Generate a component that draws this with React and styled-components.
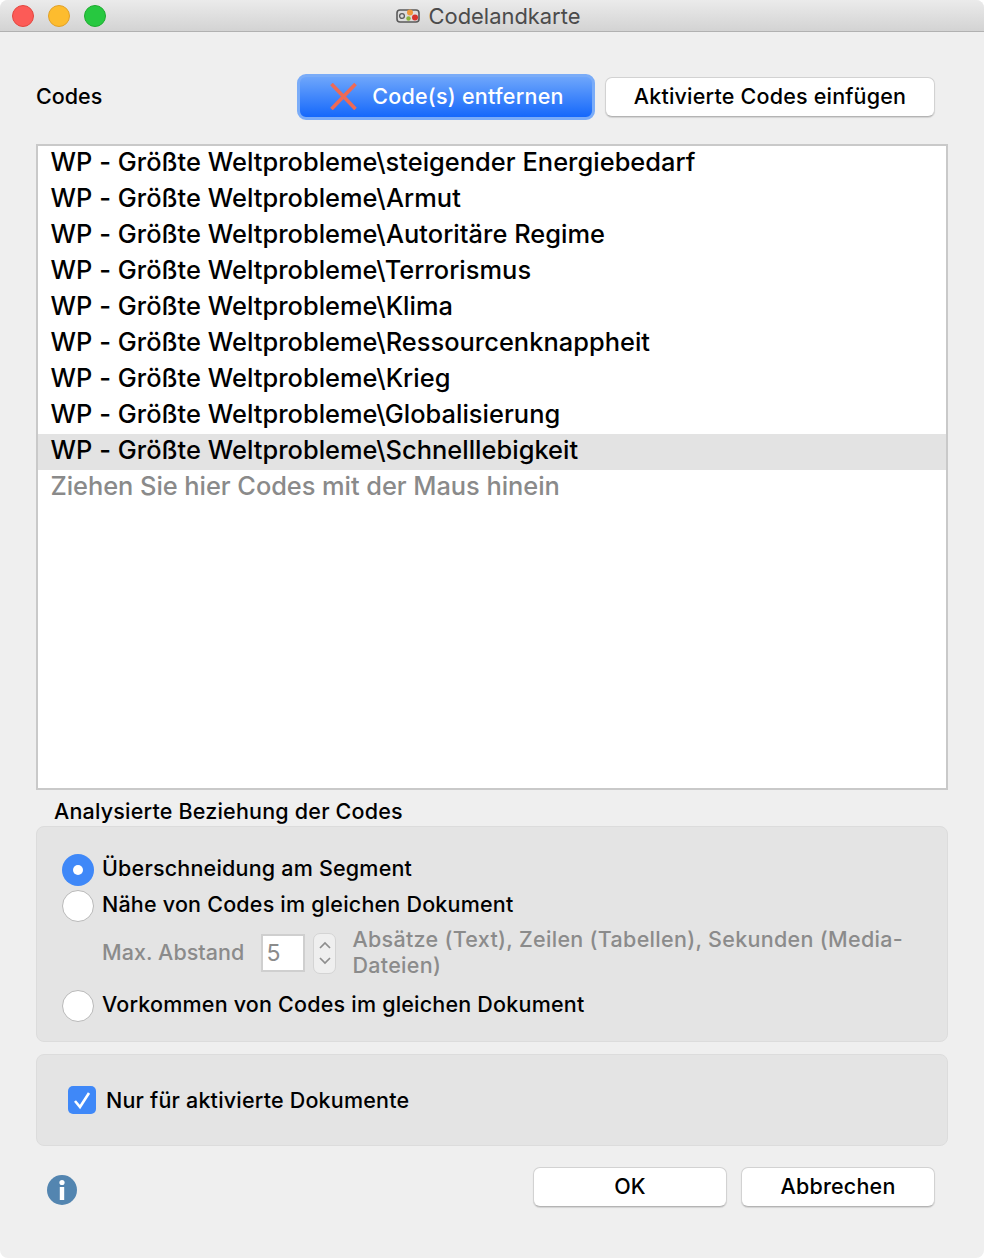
import React from 'react'
import styled, { createGlobalStyle } from 'styled-components'

const codes = [
  'steigender Energiebedarf',
  'Armut',
  'Autoritäre Regime',
  'Terrorismus',
  'Klima',
  'Ressourcenknappheit',
  'Krieg',
  'Globalisierung',
  'Schnelllebigkeit',
]

const Global = createGlobalStyle`
  html, body { margin: 0; padding: 0; background: #fff; }
  body {
    font-family: Inter, "Liberation Sans", sans-serif;
    font-weight: 450;
    letter-spacing: 0.2px;
    color: #000;
  }
`

const Window = styled.div`
  width: 984px;
  height: 1258px;
  background: #efefef;
  border-radius: 8px;
  display: flex;
  flex-direction: column;
  overflow: hidden;
`

const TitleBar = styled.div`
  height: 31px;
  flex: none;
  position: relative;
  display: flex;
  align-items: center;
  justify-content: center;
  gap: 8px;
  padding-right: 8px;
  background: linear-gradient(#ebebeb, #d3d3d3);
  border-bottom: 1px solid #b1b1b1;
  font-size: 21.9px;
  font-weight: 400;
  letter-spacing: 0;
  color: #4b4b4b;
`

const TitleText = styled.span`
  padding-top: 1px;
`

const Lights = styled.div`
  position: absolute;
  left: 12px;
  top: 5px;
  display: flex;
  gap: 14px;
`

const Light = styled.span`
  width: 22px;
  height: 22px;
  box-sizing: border-box;
  border-radius: 50%;
  background: ${p => p.$color};
  border: 1px solid ${p => p.$edge};
`

const Body = styled.div`
  flex: 1;
  display: flex;
  flex-direction: column;
  padding: 42px 36px 0;
`

const TopRow = styled.div`
  height: 46px;
  display: flex;
  align-items: center;
`

const CodesLabel = styled.div`
  font-size: 21.5px;
  letter-spacing: 0;
  flex: 1;
  padding-bottom: 2px;
`

const Button = styled.button`
  height: 40px;
  width: ${p => p.$width}px;
  margin-right: ${p => p.$right || 0}px;
  box-sizing: border-box;
  background: #fff;
  border: 1px solid #d2d2d2;
  border-bottom-color: #b4b4b4;
  border-radius: 7px;
  box-shadow: 0 1px 1px rgba(0, 0, 0, 0.12);
  font: inherit;
  font-size: 21.5px;
  letter-spacing: inherit;
  color: #000;
  padding: 0 0 2px;
`

const RemoveButton = styled.button`
  width: 298px;
  height: 46px;
  margin-right: 10px;
  box-sizing: border-box;
  display: flex;
  align-items: center;
  justify-content: center;
  gap: 15px;
  border: 3px solid #7aacf8;
  border-radius: 9px;
  background: linear-gradient(#6ea6fb, #1568fb);
  font: inherit;
  font-size: 21.5px;
  letter-spacing: 0.24px;
  color: #fff;
  padding: 0 0 2px 2px;
`

const List = styled.div`
  margin-top: 24px;
  height: 646px;
  box-sizing: border-box;
  background: #fff;
  border: 2px solid #c9c9c9;
  overflow: hidden;
`

const Row = styled.div`
  height: 36px;
  line-height: 32px;
  padding-left: 12.5px;
  font-size: 25.4px;
  letter-spacing: ${p => (p.$hint ? '-0.04px' : '0.04px')};
  white-space: nowrap;
  background: ${p => (p.$selected ? '#e3e3e3' : 'transparent')};
  color: ${p => (p.$hint ? '#8a8a8a' : '#000')};
`

const Legend = styled.div`
  font-size: 21.5px;
  line-height: 26px;
  margin: 8px 0 2px 18px;
`

const Group = styled.div`
  box-sizing: border-box;
  height: ${p => p.$height}px;
  background: #e4e4e4;
  border: 1px solid #dcdcdc;
  border-radius: 8px;
`

const RadioGroup = styled(Group)`
  padding: 25px 25px 0;
  display: flex;
  flex-direction: column;
`

const OptionRow = styled.div`
  display: flex;
  align-items: center;
  gap: 8px;
  height: 36px;
  font-size: 21.5px;
`

const OptionText = styled.span`
  padding-bottom: 4px;
`

const Radio = styled.span`
  width: 32px;
  height: 32px;
  flex: none;
  box-sizing: border-box;
  border-radius: 50%;
  display: flex;
  align-items: center;
  justify-content: center;
  background: ${p => (p.$on ? '#3f88f8' : '#fff')};
  border: ${p => (p.$on ? 'none' : '1px solid #b9b9b9')};
  &::after {
    content: '';
    display: ${p => (p.$on ? 'block' : 'none')};
    width: 10px;
    height: 10px;
    border-radius: 50%;
    background: #fff;
  }
`

const DistanceRow = styled.div`
  display: flex;
  align-items: center;
  margin: 4px 0 10px 40px;
  height: 50px;
  color: #8b8b8b;
  font-size: 21.5px;
`

const DistanceLabel = styled.span`
  letter-spacing: 0.05px;
  padding-bottom: 2px;
`

const NumberBox = styled.div`
  width: 44px;
  height: 38px;
  margin-left: 17px;
  box-sizing: border-box;
  background: #fff;
  border: 2px solid #cfcfcf;
  display: flex;
  align-items: center;
  padding-left: 3px;
  font-size: 23px;
  font-weight: 400;
`

const Stepper = styled.div`
  width: 23px;
  height: 41px;
  margin: 0 16px 0 8px;
  box-sizing: border-box;
  border: 1px solid #d4d4d4;
  border-radius: 7px;
  background: #efefef;
  display: flex;
  align-items: center;
  justify-content: center;
`

const DistanceNote = styled.div`
  width: 560px;
  line-height: 26px;
  padding-bottom: 3px;
  letter-spacing: 0.3px;
`

const CheckGroup = styled(Group)`
  margin-top: 12px;
  padding-left: 31px;
  display: flex;
  align-items: center;
  gap: 10px;
  font-size: 21.5px;
`

const CheckBox = styled.span`
  width: 28px;
  height: 28px;
  flex: none;
  border-radius: 5px;
  background: #3f88f8;
  display: flex;
  align-items: center;
  justify-content: center;
`

const Footer = styled.div`
  margin-top: 21px;
  display: flex;
  align-items: flex-start;
  gap: 14px;
  padding: 0 13px 0 11px;
`

const InfoIcon = styled.svg`
  width: 30px;
  height: 30px;
  margin: 8px auto 0 0;
`

const AppIcon = () => (
  <svg width="25" height="16" viewBox="0 0 25 16">
    <rect x="1" y="2" width="22" height="12" rx="3" fill="#ddd" stroke="#5a5a5a" strokeWidth="1.6" />
    <circle cx="6" cy="8" r="2.4" fill="none" stroke="#5a5a5a" strokeWidth="1.3" />
    <circle cx="14" cy="4.5" r="3" fill="#f0983c" />
    <circle cx="12.5" cy="10.5" r="2.2" fill="#8cb43c" />
    <circle cx="19" cy="9.5" r="3" fill="#d8322c" />
  </svg>
)

export default function App() {
  return (
    <Window>
      <Global />
      <TitleBar>
        <Lights>
          <Light $color="#fc5b57" $edge="#e2473f" />
          <Light $color="#fdbc2e" $edge="#e0a028" />
          <Light $color="#27c840" $edge="#1eab2f" />
        </Lights>
        <AppIcon />
        <TitleText>Codelandkarte</TitleText>
      </TitleBar>
      <Body>
        <TopRow>
          <CodesLabel>Codes</CodesLabel>
          <RemoveButton>
            <svg width="27" height="27" viewBox="0 0 27 27">
              <path d="M1.5 1 L25.5 26 M25.5 1 L1.5 26" stroke="#ee6a55" strokeWidth="3.6" />
            </svg>
            Code(s) entfernen
          </RemoveButton>
          <Button $width={330} $right={13}>Aktivierte Codes einfügen</Button>
        </TopRow>
        <List>
          {codes.map(c => (
            <Row key={c} $selected={c === 'Schnelllebigkeit'}>WP - Größte Weltprobleme\{c}</Row>
          ))}
          <Row $hint>Ziehen Sie hier Codes mit der Maus hinein</Row>
        </List>
        <Legend>Analysierte Beziehung der Codes</Legend>
        <RadioGroup $height={216}>
          <OptionRow><Radio $on /><OptionText>Überschneidung am Segment</OptionText></OptionRow>
          <OptionRow><Radio /><OptionText>Nähe von Codes im gleichen Dokument</OptionText></OptionRow>
          <DistanceRow>
            <DistanceLabel>Max. Abstand</DistanceLabel>
            <NumberBox>5</NumberBox>
            <Stepper>
              <svg width="14" height="32" viewBox="0 0 14 32" fill="none" stroke="#8d8d8d" strokeWidth="1.7">
                <path d="M2 11 L7 6 L12 11" />
                <path d="M2 21 L7 26 L12 21" />
              </svg>
            </Stepper>
            <DistanceNote>Absätze (Text), Zeilen (Tabellen), Sekunden (Media-Dateien)</DistanceNote>
          </DistanceRow>
          <OptionRow><Radio /><OptionText>Vorkommen von Codes im gleichen Dokument</OptionText></OptionRow>
        </RadioGroup>
        <CheckGroup $height={92}>
          <CheckBox>
            <svg width="20" height="20" viewBox="0 0 20 20" fill="none" stroke="#fff" strokeWidth="2.6">
              <path d="M3 11 L8 17 L17 3" />
            </svg>
          </CheckBox>
          Nur für aktivierte Dokumente
        </CheckGroup>
        <Footer>
          <InfoIcon viewBox="0 0 30 30">
            <circle cx="15" cy="15" r="15" fill="#5385b0" />
            <circle cx="15" cy="7.5" r="2.6" fill="#fff" />
            <rect x="12.8" y="12" width="4.4" height="13" fill="#fff" />
          </InfoIcon>
          <Button $width={194}>OK</Button>
          <Button $width={194}>Abbrechen</Button>
        </Footer>
      </Body>
    </Window>
  )
}
